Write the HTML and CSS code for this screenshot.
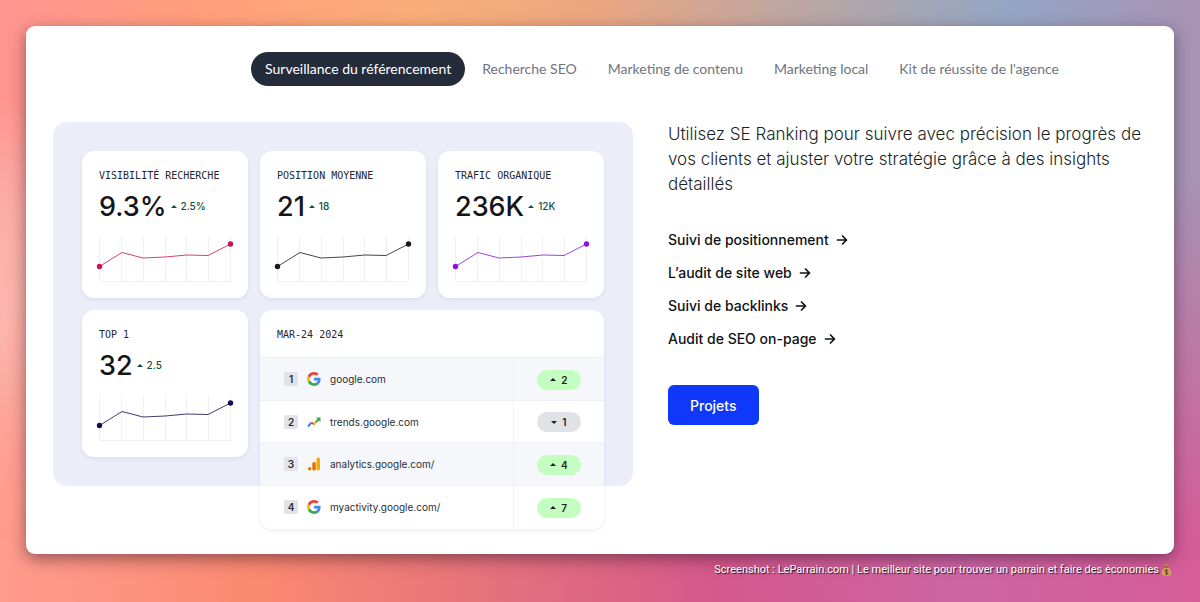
FILE: index.html
```html
<!DOCTYPE html>
<html lang="fr">
<head>
  <meta charset="UTF-8" />
  <meta name="viewport" content="width=device-width, initial-scale=1.0" />
  <title>SE Ranking - Surveillance du référencement</title>
  <link rel="stylesheet" href="styles.css">
</head>
<body>
  <!-- Shared shapes -->
  <svg class="defs" width="0" height="0" aria-hidden="true">
    <symbol id="chart" viewBox="0 0 140 52">
      <path class="chart-grid" d="M4.500 4v45M26.500 4v45M48.500 4v45M70.500 4v45M91.500 4v45M113.500 4v45M135.500 4v45M4 49.500h132" />
      <polyline class="chart-line" points="4.500,34.500 27,20.500 48,26 70,25 92,23 113,23.500 135.500,12" />
      <circle class="chart-dot" cx="4.500" cy="34.500" r="2.700" />
      <circle class="chart-dot" cx="135.500" cy="12" r="2.700" />
    </symbol>
    <symbol id="google" viewBox="0 0 48 48">
      <path fill="#4285f4" d="M46.500 24.500c0-1.600-.2-3.100-.4-4.500H24v9h12.700c-.6 3-2.300 5.500-4.800 7.100l7.600 6c4.500-4.200 7-10.300 7-17.600z" />
      <path fill="#34a853" d="M24 48c6.500 0 11.900-2.100 15.900-5.800l-7.700-6c-2.200 1.400-4.900 2.300-8.200 2.300-6.300 0-11.600-4.200-13.500-9.900l-7.900 6.100C6.500 42.600 14.600 48 24 48z" />
      <path fill="#fbbc05" d="M10.500 28.600a14.500 14.500 0 0 1 0-9.200l-7.900-6.100a24 24 0 0 0 0 21.400z" />
      <path fill="#ea4335" d="M24 9.500c3.500 0 6.700 1.200 9.200 3.600l6.900-6.900C35.900 2.400 30.500 0 24 0 14.600 0 6.500 5.400 2.600 13.300l7.900 6.100C12.400 13.700 17.700 9.500 24 9.500z" />
    </symbol>
    <symbol id="arrow" viewBox="0 0 12 12">
      <path d="M1.500 6h9M6.500 2 10.500 6l-4 4" fill="none" stroke="currentColor" stroke-width="1.700" stroke-linecap="round" stroke-linejoin="round" />
    </symbol>
  </svg>

  <main class="window">
    <nav class="tabs">
      <button class="tab active" type="button">Surveillance du référencement</button>
      <button class="tab" type="button">Recherche SEO</button>
      <button class="tab" type="button">Marketing de contenu</button>
      <button class="tab" type="button">Marketing local</button>
      <button class="tab" type="button">Kit de réussite de l'agence</button>
    </nav>

    <div class="content">
      <div class="board">
        <section class="card red">
          <h3>VISIBILITÉ RECHERCHE</h3>
          <div class="figure"><strong>9.3%</strong><span class="up"></span><span class="delta">2.5%</span></div>
          <svg class="chart"><use href="#chart" /></svg>
        </section>
        <section class="card black">
          <h3>POSITION MOYENNE</h3>
          <div class="figure"><strong>21</strong><span class="up"></span><span class="delta">18</span></div>
          <svg class="chart"><use href="#chart" /></svg>
        </section>
        <section class="card purple">
          <h3>TRAFIC ORGANIQUE</h3>
          <div class="figure"><strong>236K</strong><span class="up"></span><span class="delta">12K</span></div>
          <svg class="chart"><use href="#chart" /></svg>
        </section>
        <section class="card navy">
          <h3>TOP 1</h3>
          <div class="figure"><strong>32</strong><span class="up"></span><span class="delta">2.5</span></div>
          <svg class="chart"><use href="#chart" /></svg>
        </section>

        <section class="ranking">
          <h3>MAR-24 2024</h3>
          <table>
            <tr>
              <td><div class="site"><span class="rank">1</span><svg class="favicon"><use href="#google" /></svg>google.com</div></td>
              <td class="change"><span class="pill"><span class="up"></span>2</span></td>
            </tr>
            <tr>
              <td><div class="site"><span class="rank">2</span><svg class="favicon" viewBox="0 0 14 14"><path d="M1 11.500 4.500 7.500" stroke="#4285f4" /><path d="M4.500 7.500 7.500 9.500" stroke="#ea4335" /><path d="M7 9.500 9.500 6.500" stroke="#fbbc05" /><path d="M9 7 12 4" stroke="#34a853" /><path d="M9 2.500h4.500V7z" fill="#34a853" /></svg>trends.google.com</div></td>
              <td class="change"><span class="pill lost"><span class="down"></span>1</span></td>
            </tr>
            <tr>
              <td><div class="site"><span class="rank">3</span><svg class="favicon" viewBox="0 0 14 14"><rect x="9.500" y="0.500" width="3.500" height="13" rx="1.700" fill="#f9ab00" /><rect x="5.300" y="5" width="3.500" height="8.500" rx="1.500" fill="#e37400" /><circle cx="2.700" cy="11.800" r="1.700" fill="#e37400" /></svg>analytics.google.com/</div></td>
              <td class="change"><span class="pill"><span class="up"></span>4</span></td>
            </tr>
            <tr>
              <td><div class="site"><span class="rank">4</span><svg class="favicon"><use href="#google" /></svg>myactivity.google.com/</div></td>
              <td class="change"><span class="pill"><span class="up"></span>7</span></td>
            </tr>
          </table>
        </section>
      </div>

      <div class="info">
        <p>Utilisez SE Ranking pour suivre avec précision le progrès de vos clients et ajuster votre stratégie grâce à des insights détaillés</p>
        <ul class="links">
          <li><a href="#">Suivi de positionnement <svg><use href="#arrow" /></svg></a></li>
          <li><a href="#">L’audit de site web <svg><use href="#arrow" /></svg></a></li>
          <li><a href="#">Suivi de backlinks <svg><use href="#arrow" /></svg></a></li>
          <li><a href="#">Audit de SEO on-page <svg><use href="#arrow" /></svg></a></li>
        </ul>
        <button class="cta" type="button">Projets</button>
      </div>
    </div>
  </main>

  <footer>
    <span>Screenshot : LeParrain.com | Le meilleur site pour trouver un parrain et faire des économies</span>
    <svg class="bag" viewBox="0 0 12 14" aria-hidden="true">
      <path d="M3.500 1 6 .5 8.500 1 7.500 3.500h-3z" fill="#b8864b" />
      <path d="M4.500 4h3c2 1.500 4 4 4 6.500 0 2-1.500 3-5.500 3s-5.500-1-5.500-3C.5 8 2.500 5.500 4.500 4z" fill="#cfa062" />
      <path d="M4 3.700h4" stroke="#71401f" stroke-width="1" />
      <path d="M7.800 7.500C7 6.700 4.300 6.700 4.300 8S7.800 9 7.800 10.400 5 11.800 4.200 10.900M6 6v6.500" fill="none" stroke="#5c3a17" stroke-width=".9" />
    </svg>
  </footer>
</body>
</html>
```

FILE: styles.css
```css
* {
  box-sizing: border-box;
}

body {
  margin: 0;
  min-height: 100vh;
  padding: 26px 26px 0;
  display: flex;
  flex-direction: column;
  font-family: Inter, "Liberation Sans", sans-serif;
  color: #1b1f27;
  background: linear-gradient(90deg, #ff9c8c 0%, #fb8870 22%, #e4707c 42%, #d5588c 60%, #cb64a4 80%, #d65c98 100%);
}

/* Warm to blue sweep over the top, fading into the pink below */
body::before {
  content: "";
  position: absolute;
  inset: 0;
  z-index: -1;
  background:
    radial-gradient(90px 240px at 0 56%, #f8cac6, transparent),
    linear-gradient(90deg, #ff9490 0%, #ff9f7c 17%, #faad78 35%, #eaa682 50%, #b8a6a6 68%, #93a6c4 84%, #a892b4 100%);
  -webkit-mask-image: linear-gradient(#000 30%, transparent 90%);
  mask-image: linear-gradient(#000 30%, transparent 90%);
}

.defs {
  position: absolute;
}

h3,
p,
ul {
  margin: 0;
  padding: 0;
}

button {
  border: 0;
  background: none;
  font-family: inherit;
  cursor: pointer;
}

.window {
  flex: 1;
  padding: 26px 24px 24px 27px;
  background: #fff;
  border-radius: 9px;
  box-shadow: 0 5px 16px rgba(50, 20, 40, 0.5);
}

/* Tabs */
.tabs {
  display: flex;
  justify-content: center;
  gap: 3px;
  margin-bottom: 36px;
  padding-left: 121px;
}

.tab {
  height: 34px;
  padding: 0 14px 2px;
  border-radius: 17px;
  font-family: Lato, sans-serif;
  font-size: 14px;
  font-weight: 400;
  color: #6d7582;
  white-space: nowrap;
}

.tab.active {
  background: #242c3c;
  color: #fff;
}

.content {
  display: grid;
  grid-template-columns: 580fr 482fr;
  gap: 35px;
  align-items: start;
}

/* Dashboard preview, the ranking table hangs out of the bottom */
.board {
  display: grid;
  grid-template-columns: repeat(3, 1fr);
  gap: 12px;
  height: 364px;
  padding: 29px;
  background: #ebeef9;
  border-radius: 14px;
}

.card,
.ranking {
  background: #fff;
  border-radius: 12px;
  box-shadow: 0 2px 4px rgba(30, 40, 90, 0.07);
}

.card {
  height: 147px;
  padding: 18px 10px 0 17px;
}

h3 {
  font-family: "DejaVu Sans Mono", monospace;
  font-size: 10px;
  line-height: 14px;
  font-weight: 400;
  color: #23272e;
  white-space: nowrap;
}

.figure {
  display: flex;
  align-items: center;
  gap: 4px;
  height: 46px;
}

.figure strong {
  font-size: 27px;
  font-weight: 500;
  color: #14161a;
}

.up,
.down {
  border: 3px solid transparent;
  border-top: 0;
  border-bottom-color: currentColor;
}

.down {
  border-top: 3px solid currentColor;
  border-bottom: 0;
}

.figure .up,
.delta {
  font-size: 10px;
  font-weight: 500;
  color: #10503f;
}

.chart {
  display: block;
  width: 140px;
  height: 52px;
  margin: 3px 0 0 -4px;
}

.chart-grid {
  stroke: #f0f0f2;
  fill: none;
}

.chart-line {
  fill: none;
  stroke: currentColor;
  opacity: 0.8;
}

.chart-dot {
  fill: currentColor;
}

.red .chart { color: #c8134f; }
.black .chart { color: #16181b; }
.purple .chart { color: #8a13dc; }
.navy .chart { color: #120c50; }

.ranking {
  grid-column: span 2;
  height: 219px;
  overflow: hidden;
}

.ranking h3 {
  padding: 18px 17px 15px;
}

table {
  width: 100%;
  border-collapse: collapse;
}

tr {
  height: 43px;
}

tr:nth-child(even) {
  height: 42px;
}

tr:nth-child(odd) {
  background: #f6f7fb;
}

td {
  padding: 0;
  border-top: 1px solid #eef0f4;
}

.change {
  width: 91px;
  border-left: 1px solid #eef0f4;
  text-align: center;
}

.site {
  display: flex;
  align-items: center;
  padding-left: 24px;
  font-size: 10px;
  color: #2a2e36;
}

.rank {
  width: 14px;
  height: 14px;
  line-height: 14px;
  border-radius: 2px;
  background: #e1e3e8;
  text-align: center;
  font-weight: 600;
}

.favicon {
  width: 14px;
  height: 14px;
  margin: 0 9px;
  fill: none;
  stroke-width: 2;
}

.pill {
  display: inline-flex;
  align-items: center;
  justify-content: center;
  vertical-align: middle;
  gap: 5px;
  width: 44px;
  height: 20px;
  border-radius: 10px;
  background: #c3fdc0;
  font-size: 10px;
  font-weight: 600;
}

.pill.lost {
  background: #e0e2e6;
}

/* Right column */
.info p {
  font-size: 17px;
  line-height: 25px;
  font-weight: 300;
}

.links {
  list-style: none;
  margin: 31px 0 34px;
  display: grid;
  gap: 9px;
}

.links a {
  display: flex;
  align-items: center;
  gap: 7px;
  font-size: 14px;
  line-height: 24px;
  font-weight: 500;
  color: #101216;
  text-decoration: none;
}

.links svg {
  width: 12px;
  height: 12px;
}

.cta {
  height: 40px;
  padding: 0 22px;
  border-radius: 6px;
  background: #1038fa;
  color: #fff;
  font-size: 14px;
  font-weight: 500;
}

footer {
  display: flex;
  justify-content: flex-end;
  align-items: center;
  gap: 2px;
  height: 48px;
  padding-bottom: 17px;
  padding-right: 2px;
  font-family: Roboto, sans-serif;
  font-size: 11px;
  color: #fff;
  text-shadow: 1px 1px 1px rgba(0, 0, 0, 0.8);
}

.bag {
  width: 11px;
  height: 14px;
}
```
